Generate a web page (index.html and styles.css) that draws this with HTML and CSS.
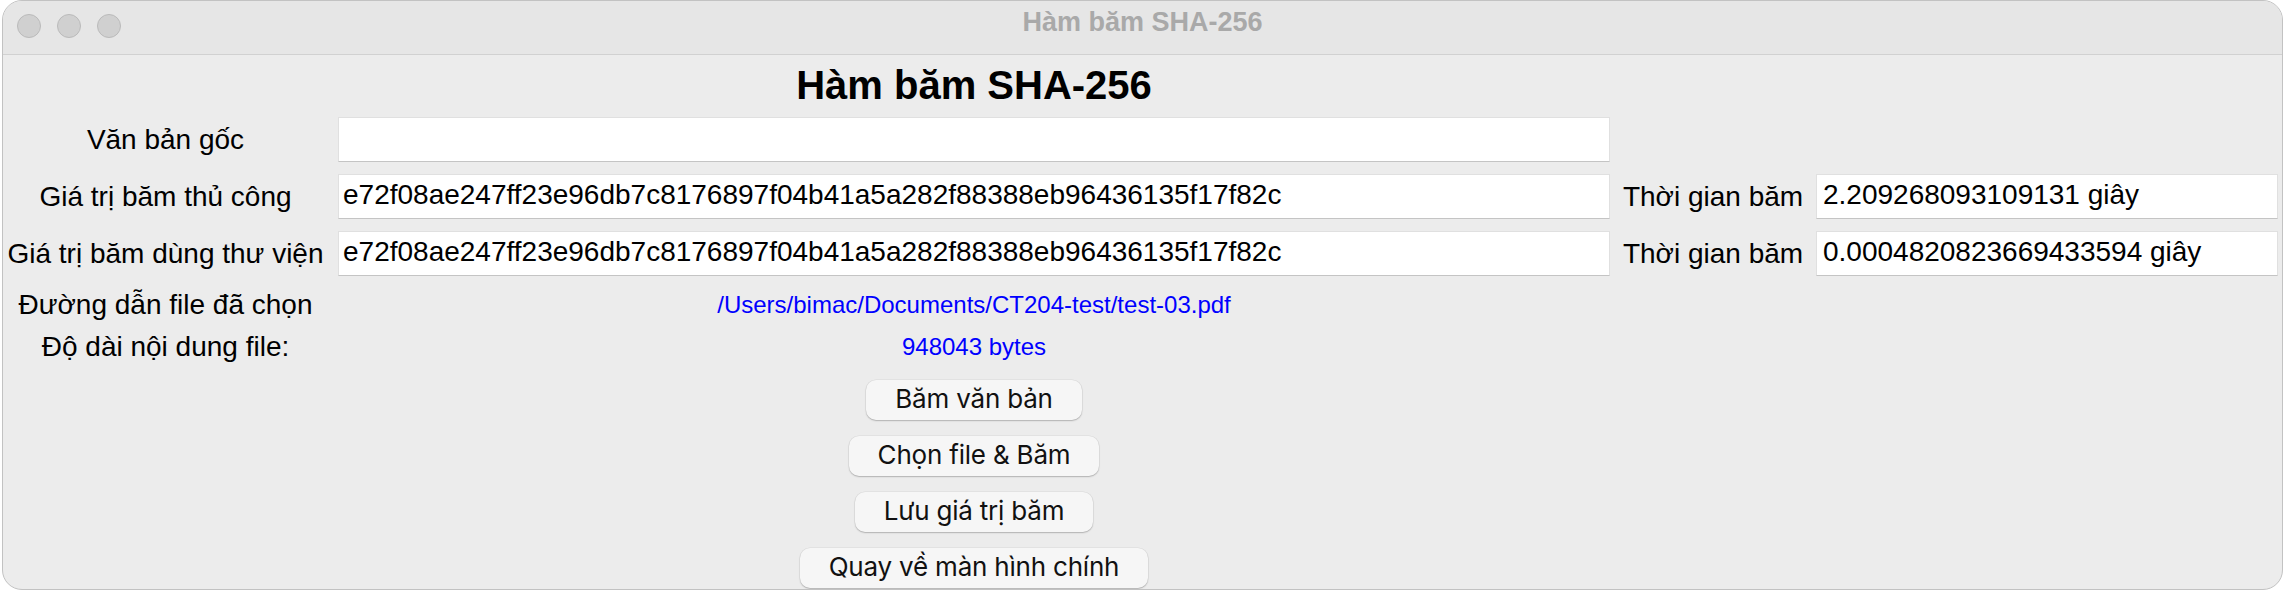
FILE: index.html
```html
<!DOCTYPE html>
<html lang="vi">
<head>
<meta charset="utf-8">
<title>Hàm băm SHA-256</title>
<link rel="stylesheet" href="styles.css">
</head>
<body>
<div class="window">
  <div class="titlebar">
    <div class="lights">
      <span class="light"></span>
      <span class="light"></span>
      <span class="light"></span>
    </div>
    <div class="wtitle">Hàm băm SHA-256</div>
  </div>
  <div class="form">
    <h1 class="heading">Hàm băm SHA-256</h1>

    <div class="lbl">Văn bản gốc</div>
    <input class="entry entry-main" type="text" value="">

    <div class="lbl">Giá trị băm thủ công</div>
    <input class="entry entry-main" type="text" value="e72f08ae247ff23e96db7c8176897f04b41a5a282f88388eb96436135f17f82c">
    <div class="lbl-time">Thời gian băm</div>
    <input class="entry entry-time" type="text" value="2.209268093109131 giây">

    <div class="lbl">Giá trị băm dùng thư viện</div>
    <input class="entry entry-main" type="text" value="e72f08ae247ff23e96db7c8176897f04b41a5a282f88388eb96436135f17f82c">
    <div class="lbl-time">Thời gian băm</div>
    <input class="entry entry-time" type="text" value="0.0004820823669433594 giây">

    <div class="lbl lbl-info">Đường dẫn file đã chọn</div>
    <div class="info">/Users/bimac/Documents/CT204-test/test-03.pdf</div>

    <div class="lbl lbl-info">Độ dài nội dung file:</div>
    <div class="info">948043 bytes</div>

    <div class="buttons">
      <button class="btn" type="button">Băm văn bản</button>
      <button class="btn" type="button">Chọn file &amp; Băm</button>
      <button class="btn" type="button">Lưu giá trị băm</button>
      <button class="btn" type="button">Quay về màn hình chính</button>
    </div>
  </div>
</div>
</body>
</html>
```

FILE: styles.css
```css
* {
  box-sizing: border-box;
}

html,
body {
  margin: 0;
  padding: 0;
}

body {
  width: 2288px;
  height: 590px;
  overflow: hidden;
  background: #ffffff;
  font-family: "Liberation Sans", Arial, Helvetica, sans-serif;
  color: #000000;
}

.window {
  margin-left: 2px;
  width: 2281px;
  height: 590px;
  background: #ececec;
  border: 1px solid #c2c2c2;
  border-radius: 20px;
  overflow: hidden;
}

.titlebar {
  height: 54px;
  background: #e6e6e6;
  border-bottom: 1px solid #d1d1d1;
  padding-bottom: 4px;
  display: grid;
  grid-template-columns: 1fr auto 1fr;
  align-items: center;
}

.lights {
  display: flex;
  gap: 16px;
  padding-left: 14px;
}

.light {
  width: 24px;
  height: 24px;
  border-radius: 50%;
  background: #d0d0d0;
  border: 1px solid #bababa;
}

.wtitle {
  font-size: 27px;
  font-weight: bold;
  color: #a9a9a9;
  margin-bottom: 7px;
  white-space: nowrap;
}

.form {
  display: grid;
  grid-template-columns: 335px 1272px 206px 462px;
  grid-template-rows: 50px 45px 45px 45px 31px 30px auto;
  row-gap: 12px;
}

.heading {
  grid-column: 2;
  margin: 0;
  padding-top: 11px;
  font-size: 40px;
  line-height: 39px;
  font-weight: bold;
  text-align: center;
  white-space: nowrap;
}

.lbl {
  grid-column: 1;
  padding-right: 10px;
  font-size: 28px;
  line-height: 45px;
  text-align: center;
  white-space: nowrap;
}

.lbl-info {
  align-self: end;
  line-height: 28px;
}

.lbl-time {
  grid-column: 3;
  font-size: 28px;
  line-height: 45px;
  text-align: center;
  white-space: nowrap;
}

.entry {
  width: 100%;
  height: 45px;
  margin: 0;
  padding: 0 4px 4px 4px;
  background: #ffffff;
  border: 1px solid #e0e0e0;
  border-bottom-color: #c4c4c4;
  border-radius: 0;
  outline: none;
  font-family: "Liberation Sans", Arial, Helvetica, sans-serif;
  font-size: 28px;
  color: #000000;
}

.entry-main {
  grid-column: 2;
}

.entry-time {
  grid-column: 4;
  padding-left: 6px;
}

.info {
  grid-column: 2;
  align-self: end;
  font-size: 24px;
  line-height: 28px;
  text-align: center;
  color: #0000ff;
  white-space: nowrap;
}

.buttons {
  grid-column: 2;
  margin-top: 7px;
  display: flex;
  flex-direction: column;
  align-items: center;
  gap: 16px;
}

.btn {
  height: 40px;
  padding: 0 29px 2px 29px;
  margin: 0;
  border: none;
  border-radius: 10px;
  background: #f6f6f6;
  box-shadow: 0 1px 1.5px rgba(0, 0, 0, 0.22), 0 0 0 0.5px rgba(0, 0, 0, 0.07);
  font-family: Inter, "Noto Sans", sans-serif;
  font-size: 26px;
  line-height: 38px;
  letter-spacing: -0.2px;
  color: #111111;
  white-space: nowrap;
}
```
